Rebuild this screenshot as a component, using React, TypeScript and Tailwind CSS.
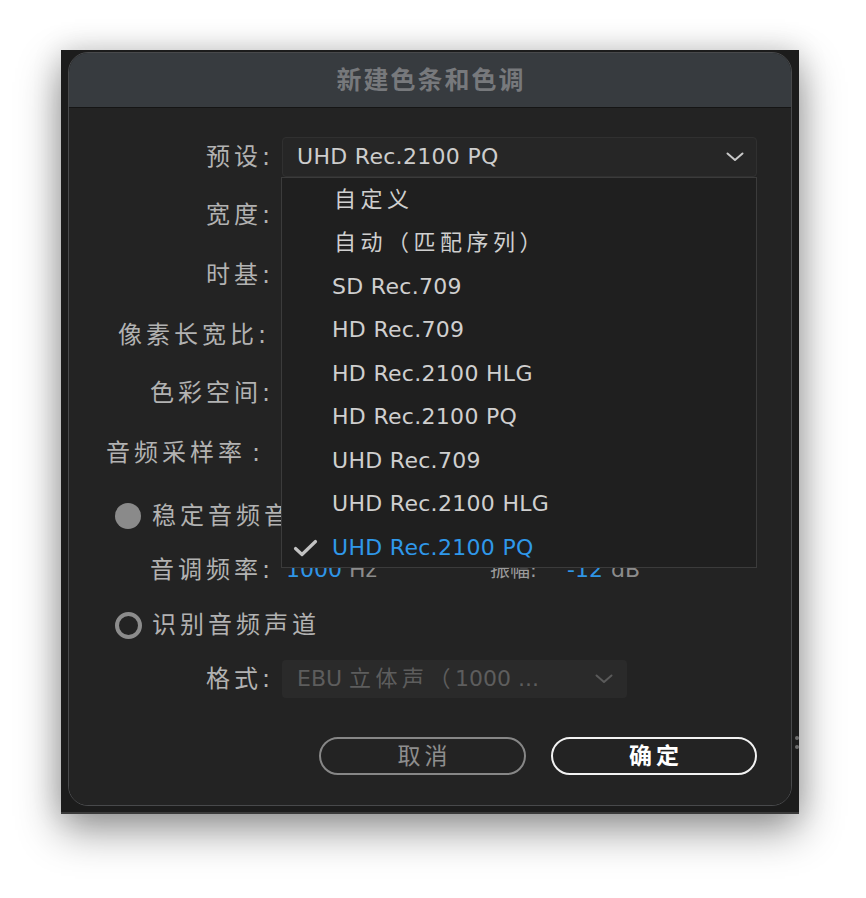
import React from "react";

const menuItems: { text: string; cjk?: boolean; selected?: boolean }[] = [
  { text: "自定义", cjk: true },
  { text: "自动（匹配序列）", cjk: true },
  { text: "SD Rec.709" },
  { text: "HD Rec.709" },
  { text: "HD Rec.2100 HLG" },
  { text: "HD Rec.2100 PQ" },
  { text: "UHD Rec.709" },
  { text: "UHD Rec.2100 HLG" },
  { text: "UHD Rec.2100 PQ", selected: true },
];

function Label({ children, extra = "" }: { children: React.ReactNode; extra?: string }) {
  return (
    <div className={`w-[205px] shrink-0 text-right text-[24px] tracking-[4px] text-[#b2b2b2] leading-none ${extra}`}>
      {children}
    </div>
  );
}

function Chevron({ color }: { color: string }) {
  return (
    <svg width="18" height="10" viewBox="0 0 18 10" fill="none">
      <path d="M1.5 1.5 L9 8 L16.5 1.5" stroke={color} strokeWidth="2" strokeLinecap="round" strokeLinejoin="round" />
    </svg>
  );
}

export default function App() {
  return (
    <div className="w-[866px] min-h-[898px] bg-white pt-[50px] pl-[61px] font-['DejaVu_Sans','Noto_Sans_CJK_SC',sans-serif]">
      <div className="relative w-[738px] h-[762px] bg-[#1c1c1c] pt-[2px] px-[7px] pb-[6px] shadow-[0_2px_0_#3a3a3a,0_18px_40px_rgba(0,0,0,0.42),0_0_28px_rgba(0,0,0,0.14)]">
        {/* tiny dots on right edge */}
        <div className="absolute right-[0px] top-[686px] w-[4px] h-[4px] rounded-full bg-[#6e6e6e]" />
        <div className="absolute right-[0px] top-[695px] w-[4px] h-[4px] rounded-full bg-[#6e6e6e]" />

        <div className="h-full rounded-[20px] border border-[#48494b] overflow-hidden flex flex-col">
          {/* Title bar */}
          <div className="h-[55px] shrink-0 bg-[#373b3f] border-b border-[#151515] flex items-center justify-center">
            <span className="pl-[2px] text-[25px] font-bold tracking-[2px] text-[#77797c] leading-none">新建色条和色调</span>
          </div>

          {/* Body */}
          <div className="relative flex-1 bg-[#232323] pt-[29px] flex flex-col">
            {/* 预设 */}
            <div className="flex items-center h-[40px]">
              <Label>预设:</Label>
              <div className="ml-[8px] w-[475px] h-[40px] bg-[#262626] border border-[#303030] rounded-[4px] flex items-center justify-between pl-[14px] pr-[12px]">
                <span className="text-[22px] text-[#cdcdcd] tracking-[0.3px] leading-none">UHD Rec.2100 PQ</span>
                <Chevron color="#c8c8c8" />
              </div>
            </div>

            <div className="flex items-center h-[40px] mt-[18px]">
              <Label>宽度:</Label>
            </div>
            <div className="flex items-center h-[40px] mt-[20px]">
              <Label>时基:</Label>
            </div>
            <div className="flex items-center h-[40px] mt-[20px]">
              <Label extra="pr-[4px]">像素长宽比:</Label>
            </div>
            <div className="flex items-center h-[40px] mt-[18px]">
              <Label>色彩空间:</Label>
            </div>
            <div className="flex items-center h-[40px] mt-[20px]">
              <Label extra="pr-[10px]">
                音频采样率<span className="ml-[6px]">:</span>
              </Label>
            </div>

            {/* Radio 1 */}
            <div className="flex items-center h-[40px] mt-[23px] pl-[46px]">
              <div className="w-[26px] h-[26px] rounded-full bg-[#8a8a8a]" />
              <span className="ml-[11px] text-[24px] tracking-[4px] text-[#b2b2b2] leading-none">稳定音频音调</span>
            </div>

            {/* 音调频率 */}
            <div className="flex items-center h-[40px] mt-[14px]">
              <Label>音调频率:</Label>
              <div className="ml-[8px] flex items-center leading-none">
                <span className="w-[208px] pl-[4px] text-[22px]">
                  <span className="text-[#2f95e6]">1000</span>
                  <span className="text-[#8c8c8c]"> Hz</span>
                </span>
                <span className="w-[77px] text-[20px] text-[#9a9a9a]">振幅:</span>
                <span className="text-[22px] text-[#2f95e6]">-12</span>
                <span className="text-[22px] text-[#8c8c8c] ml-[8px]">dB</span>
              </div>
            </div>

            {/* Radio 2 */}
            <div className="flex items-center h-[40px] mt-[15px] pl-[46px]">
              <div className="w-[27px] h-[27px] rounded-full border-[4px] border-[#8c8c8c]" />
              <span className="ml-[10px] text-[24px] tracking-[4px] text-[#b2b2b2] leading-none">识别音频声道</span>
            </div>

            {/* 格式 */}
            <div className="flex items-center h-[40px] mt-[14px]">
              <Label>格式:</Label>
              <div className="ml-[8px] w-[345px] h-[38px] bg-[#2a2a2a] rounded-[4px] flex items-center justify-between pl-[15px] pr-[14px]">
                <span className="text-[22px] text-[#5d5d5d] leading-none whitespace-nowrap">
                  EBU <span className="tracking-[4.5px]">立体声（</span>1000 ...
                </span>
                <Chevron color="#5a5a5a" />
              </div>
            </div>

            {/* Buttons */}
            <div className="flex justify-end gap-[25px] pr-[34px] mt-[38px]">
              <button className="w-[207px] h-[38px] rounded-full border-2 border-[#878787] text-[23px] tracking-[4px] text-[#8e8e8e] leading-none flex items-center justify-center pl-[4px]">
                取消
              </button>
              <button className="w-[206px] h-[38px] rounded-full border-2 border-[#f2f2f2] text-[23px] tracking-[4px] font-bold text-white leading-none flex items-center justify-center pl-[4px]">
                确定
              </button>
            </div>

            {/* Dropdown menu overlay */}
            <div className="absolute left-[212px] top-[69px] w-[476px] h-[391px] bg-[#1f1f1f] border border-[#3b3b3b] z-10 flex flex-col">
              {menuItems.map((it) => (
                <div key={it.text} className="relative h-[43.5px] shrink-0 flex items-center pl-[50px]">
                  {it.selected && (
                    <svg className="absolute left-[11px] top-[12px]" width="25" height="20" viewBox="0 0 25 20" fill="none">
                      <path d="M2.5 10.5 L9 16.5 L22.5 3.5" stroke="#c2c2c2" strokeWidth="3.2" strokeLinecap="round" strokeLinejoin="round" />
                    </svg>
                  )}
                  <span
                    className={`text-[22px] leading-none whitespace-nowrap ${it.cjk ? "tracking-[4.5px] pl-[2px]" : "tracking-[0.3px]"} ${it.selected ? "text-[#2f98ea]" : "text-[#cfcfcf]"}`}
                  >
                    {it.text}
                  </span>
                </div>
              ))}
            </div>
          </div>
        </div>
      </div>
    </div>
  );
}
